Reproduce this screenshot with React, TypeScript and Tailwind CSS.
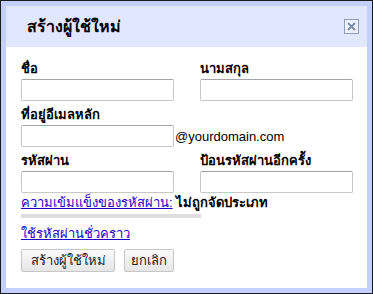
import React from 'react'

const Field = ({ label, children }: { label: string; children?: React.ReactNode }) => (
  <div className="flex flex-col">
    <label className="font-bold text-[13px] leading-4 text-black mb-[2px]">{label}</label>
    {children}
  </div>
)

const TextBox = () => (
  <input
    className="w-[153px] h-[22px] border border-[#c8c8c8] border-t-[#a4a4a4] rounded-[2px] bg-white outline-none"
    type="text"
  />
)

const App = () => {
  return (
    <div
      className="w-[373px] h-[294px] bg-[#c3cfff] border border-[#1a1a1a] p-[5px] overflow-hidden"
      style={{ fontFamily: '"Liberation Sans", "Noto Sans", Arial, sans-serif' }}
    >
      <div className="h-full flex flex-col bg-white">
        <div className="h-[41px] shrink-0 bg-[#e0e7ff] flex items-center justify-between pl-[21px] pr-[8px]">
          <h1 className="font-bold text-[16px] leading-5 text-black">สร้างผู้ใช้ใหม่</h1>
          <button className="w-[15px] h-[15px] border border-[#8d9db5] bg-[#eef1ff] flex items-center justify-center">
            <svg width="9" height="9" viewBox="0 0 9 9">
              <path d="M1 1 L8 8 M8 1 L1 8" stroke="#7b8ca6" strokeWidth="1.8" />
            </svg>
          </button>
        </div>

        <div className="flex-1 pl-[15px] pt-[14px] flex flex-col">
          <div className="grid grid-cols-[179px_1fr] gap-y-[6px]">
            <Field label="ชื่อ">
              <TextBox />
            </Field>
            <Field label="นามสกุล">
              <TextBox />
            </Field>
            <div className="col-span-2">
              <Field label="ที่อยู่อีเมลหลัก">
                <div className="flex items-center gap-[1px]">
                  <TextBox />
                  <span className="text-[13px] text-black mt-[2px]">@yourdomain.com</span>
                </div>
              </Field>
            </div>
            <Field label="รหัสผ่าน">
              <TextBox />
            </Field>
            <Field label="ป้อนรหัสผ่านอีกครั้ง">
              <TextBox />
            </Field>
          </div>

          <div className="mt-[2px] flex items-baseline gap-[3px] text-[13px] leading-4">
            <a href="#" className="text-[#2200cc] underline">ความเข้มแข็งของรหัสผ่าน:</a>
            <span className="font-bold text-black">ไม่ถูกจัดประเภท</span>
          </div>
          <div className="mt-[3px] w-[180px] h-[4px] bg-[#dddddd]" />

          <a href="#" className="mt-[8px] text-[13px] leading-4 text-[#2200cc] underline w-fit">ใช้รหัสผ่านชั่วคราว</a>

          <div className="mt-[7px] flex gap-[9px]">
            <button className="w-[94px] h-[23px] border border-[#c6c6c6] rounded-[2px] bg-gradient-to-b from-[#fafafa] to-[#e6e6e6] text-[13px] text-[#222]">
              สร้างผู้ใช้ใหม่
            </button>
            <button className="w-[50px] h-[23px] border border-[#c6c6c6] rounded-[2px] bg-gradient-to-b from-[#fafafa] to-[#e6e6e6] text-[13px] text-[#222]">
              ยกเลิก
            </button>
          </div>
        </div>
      </div>
    </div>
  )
}

export default App
